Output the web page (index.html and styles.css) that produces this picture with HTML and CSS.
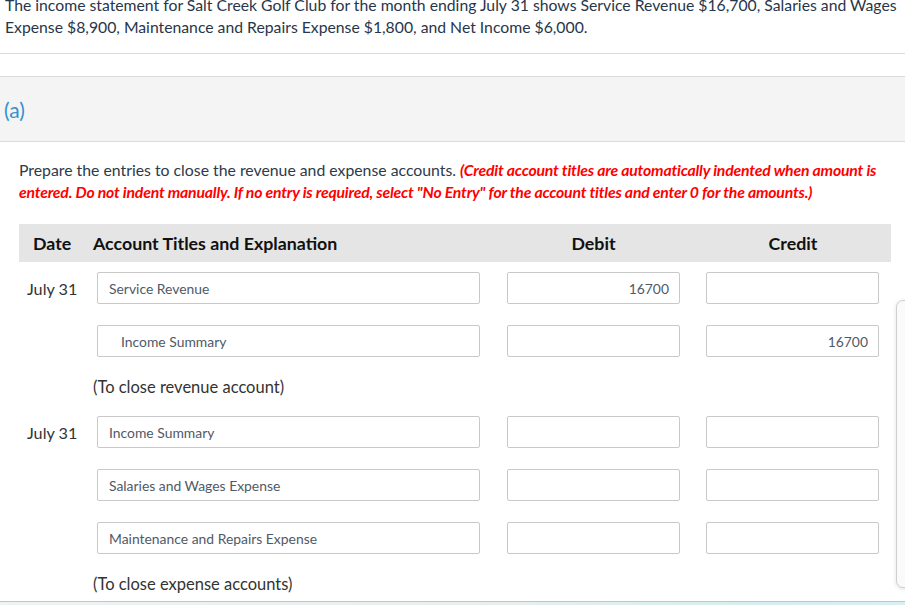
FILE: index.html
```html
<!DOCTYPE html>
<html>
<head>
<meta charset="utf-8">
<link rel="stylesheet" href="styles.css">
</head>
<body>
<div class="page">
  <p class="intro">The income statement for Salt Creek Golf Club for the month ending July 31 shows Service Revenue $16,700, Salaries and Wages Expense $8,900, Maintenance and Repairs Expense $1,800, and Net Income $6,000.</p>
  <div class="part"><span class="part-label">(a)</span></div>
  <p class="instructions">Prepare the entries to close the revenue and expense accounts. <span class="note">(Credit account titles are automatically indented when amount is entered. Do not indent manually. If no entry is required, select "No Entry" for the account titles and enter 0 for the amounts.)</span></p>

  <div class="journal">
    <div class="jrow head">
      <div class="c-date">Date</div>
      <div class="c-acct">Account Titles and Explanation</div>
      <div class="c-amt">Debit</div>
      <div class="c-amt">Credit</div>
    </div>

    <div class="jrow entry first">
      <div class="c-date">July 31</div>
      <div class="c-acct"><input class="field" value="Service Revenue" readonly></div>
      <div class="c-amt"><input class="field num" value="16700" readonly></div>
      <div class="c-amt"><input class="field num" value="" readonly></div>
    </div>
    <div class="jrow entry">
      <div class="c-date"></div>
      <div class="c-acct"><input class="field indent" value="Income Summary" readonly></div>
      <div class="c-amt"><input class="field num" value="" readonly></div>
      <div class="c-amt"><input class="field num" value="16700" readonly></div>
    </div>
    <div class="explain">(To close revenue account)</div>

    <div class="jrow entry">
      <div class="c-date">July 31</div>
      <div class="c-acct"><input class="field" value="Income Summary" readonly></div>
      <div class="c-amt"><input class="field num" value="" readonly></div>
      <div class="c-amt"><input class="field num" value="" readonly></div>
    </div>
    <div class="jrow entry">
      <div class="c-date"></div>
      <div class="c-acct"><input class="field" value="Salaries and Wages Expense" readonly></div>
      <div class="c-amt"><input class="field num" value="" readonly></div>
      <div class="c-amt"><input class="field num" value="" readonly></div>
    </div>
    <div class="jrow entry">
      <div class="c-date"></div>
      <div class="c-acct"><input class="field" value="Maintenance and Repairs Expense" readonly></div>
      <div class="c-amt"><input class="field num" value="" readonly></div>
      <div class="c-amt"><input class="field num" value="" readonly></div>
    </div>
    <div class="explain">(To close expense accounts)</div>
  </div>
  <div class="footer-strip"></div>
</div>
<div class="side-panel"></div>
</body>
</html>
```

FILE: styles.css
```css
html, body {
  margin: 0;
  padding: 0;
  background: #fff;
  overflow: hidden;
}
body {
  font-family: Lato, "Open Sans", sans-serif;
  color: #2d3a4a;
}
.page {
  margin-top: -6px;
}
.intro {
  margin: 0;
  padding: 0 2px 15px 5px;
  font-size: 15.75px;
  line-height: 22px;
  color: #27364a;
  border-bottom: 1px solid #dadada;
}
.part {
  margin-top: 22px;
  height: 66px;
  box-sizing: border-box;
  background: #f4f4f4;
  border-top: 1px solid #dcdcdc;
  border-bottom: 1px solid #dcdcdc;
  display: flex;
  align-items: center;
  padding-left: 4px;
}
.part-label {
  font-size: 21px;
  color: #3790cc;
}
.instructions {
  margin: 17px 0 0 0;
  padding: 0 10px 0 19px;
  font-size: 15.8px;
  line-height: 22px;
  color: #2d3a4a;
}
.note {
  color: #ff0000;
  font-style: italic;
  font-weight: 700;
  letter-spacing: -0.2px;
}
.journal {
  margin: 21px 14px 0 19px;
}
.jrow {
  display: grid;
  grid-template-columns: 78px 383px 200px 199px;
  align-items: center;
}
.jrow.head {
  height: 38px;
  background: #e5e5e5;
  font-weight: 700;
  font-size: 17.8px;
  color: #111;
}
.head .c-date {
  padding-left: 14px;
}
.head .c-acct {
  margin-left: -4px;
}
.head .c-amt {
  text-align: center;
  padding-left: 27px;
}
.entry {
  margin-top: 21px;
}
.entry.first {
  margin-top: 10px;
}
.entry .c-date {
  padding-left: 8px;
  font-size: 16.2px;
  color: #333;
}
.entry .c-amt {
  display: flex;
  justify-content: flex-end;
}
.field {
  box-sizing: border-box;
  height: 32px;
  width: 100%;
  border: 1px solid #c9c9c9;
  border-radius: 2px;
  font-family: Lato, "Open Sans", sans-serif;
  font-size: 13.9px;
  color: #505a66;
  padding: 0 10px 0 11px;
  background: #fff;
  outline: none;
  margin: 0;
}
.c-amt .field {
  width: 173px;
}
.field.indent {
  padding-left: 23px;
}
.field.num {
  text-align: right;
}
.explain {
  margin-left: 74px;
  padding-top: 18px;
  line-height: 24px;
  font-size: 16.5px;
  color: #333;
  margin-bottom: -4px;
}
.footer-strip {
  margin-top: 9px;
  height: 6px;
  border-top: 1px solid #c4c4c4;
  background: linear-gradient(to right, #eef2f2 0%, #e8eeee 55%, #d5eef0 85%, #d8f0f2 100%);
}
.side-panel {
  position: fixed;
  left: 896px;
  top: 300px;
  width: 30px;
  height: 288px;
  box-sizing: border-box;
  border: 1px solid #cfcfcf;
  border-radius: 7px 0 0 7px;
  background: #fafafa;
  box-shadow: 0 1px 4px rgba(0,0,0,0.12);
}
```
